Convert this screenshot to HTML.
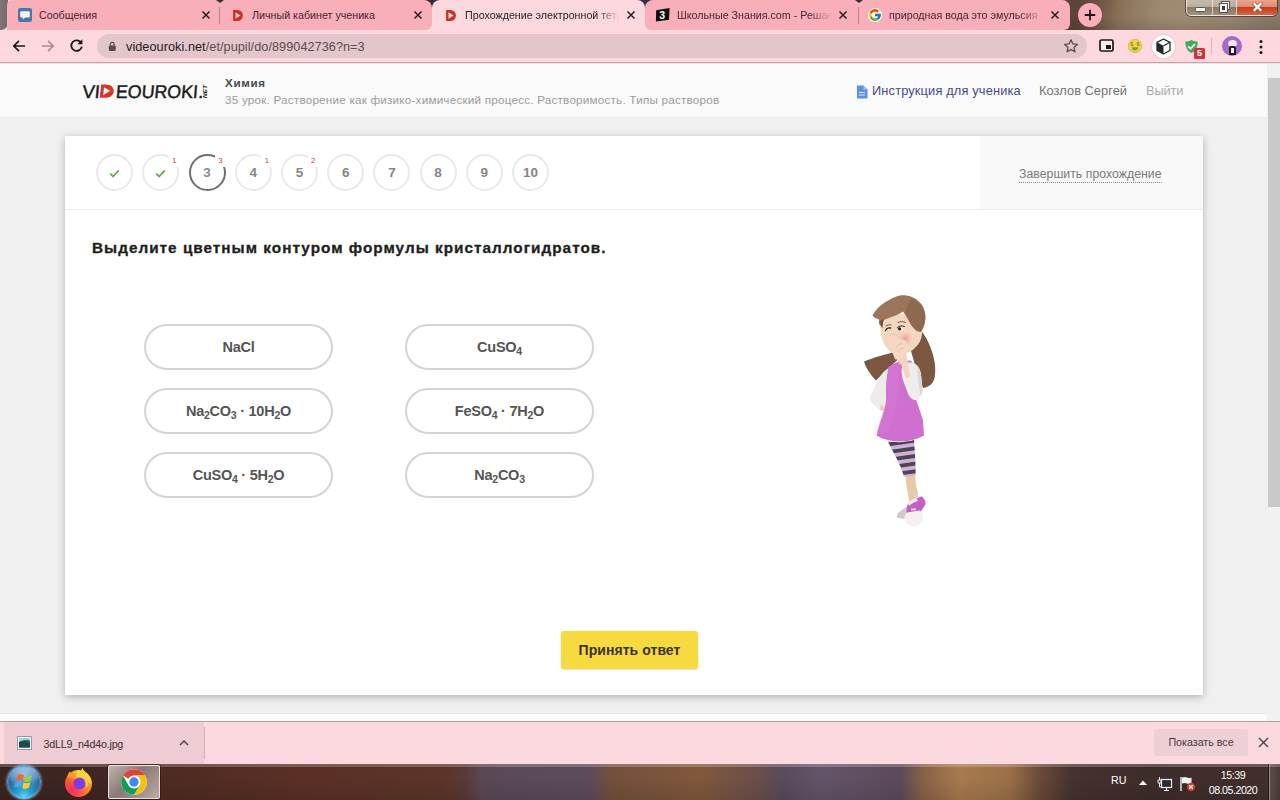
<!DOCTYPE html>
<html lang="ru">
<head>
<meta charset="utf-8">
<title>Прохождение электронной тетради</title>
<style>
*{box-sizing:border-box;margin:0;padding:0}
html,body{width:1280px;height:800px;overflow:hidden;background:#f0f0f0;font-family:"Liberation Sans",sans-serif}
.abs{position:absolute}
#screen{position:absolute;left:0;top:0;width:1280px;height:800px;overflow:hidden}

/* ---------- title / tab strip ---------- */
#titlebar{left:0;top:0;width:1280px;height:30px;background:linear-gradient(180deg,rgba(0,0,0,0) 55%,rgba(40,30,30,.16) 100%),linear-gradient(100deg,#6b6468 0,#5a5054 6px,#3b3038 220px,#2e2a3a 440px,#3a3444 650px,#4a3c40 860px,#5c4438 1066px,#745a48 1088px,#8a725a 1105px,#9c886e 1140px,#a08c72 1170px,#988670 1215px,#8c7c6a 1250px,#857765 1280px)}
.tab{top:0;height:30px;background:#f9afba;border-radius:8px 8px 8px 8px;color:#3a2a30;font-size:12px}
.tab .ttl{position:absolute;top:8px;white-space:nowrap;overflow:hidden;letter-spacing:-0.1px}
.tab .cls{position:absolute;top:9px;width:12px;height:12px}
.tabsep{top:7px;width:1px;height:17px;background:#b7838d}

#tabstrip{left:7px;top:0;width:425px;height:30px;background:#f9afba;border-radius:5px 8px 6px 0}
#tl{left:0;top:0;width:7.500px;height:29.500px;background:linear-gradient(90deg,#7d7577,#756b6d);border-radius:0 0 7px 0}
#tabstrip2{left:645px;top:0;width:425px;height:30px;background:#f9afba;border-radius:8px 8px 6px 6px}
.notch{top:0;width:0;height:0;margin-left:1.500px;border-left:4px solid transparent;border-right:4px solid transparent;border-top:3.500px solid #33303e}
#acttab{left:432px;top:0;width:213px;height:31px;background:#fdd9df;border-radius:8px 8px 0 0}
.ttl{top:8px;height:15px;font-size:10.700px;line-height:14px;color:#472430;white-space:nowrap;overflow:hidden}
.fade1{-webkit-mask-image:linear-gradient(90deg,#000 85%,transparent 100%);mask-image:linear-gradient(90deg,#000 85%,transparent 100%)}
.fade2{-webkit-mask-image:linear-gradient(90deg,#000 85%,transparent 100%);mask-image:linear-gradient(90deg,#000 85%,transparent 100%)}
.cls{top:10px;width:10px;height:10px}
#wc{left:1186px;top:0;width:91px;height:15.500px;border:1px solid rgba(255,255,255,.65);border-top:0;border-radius:0 0 5px 5px;background:linear-gradient(rgba(255,255,255,.42) 0,rgba(255,255,255,.3) 46%,rgba(60,50,45,.18) 50%,rgba(255,255,255,.06) 100%);box-shadow:0 0 0 1px rgba(40,30,30,.6)}
#toolbar{left:0;top:30px;width:1280px;height:32px;background:#fdd9df}
#toolbar-border{left:0;top:62px;width:1280px;height:2px;background:linear-gradient(#c4a2a8 0,#c4a2a8 50%,#eee0e3 50%,#eee0e3 100%);z-index:5}
#omni{left:97px;top:34px;width:990px;height:24px;border-radius:12px;background:#e2c6cb}
#url{left:126px;top:39.500px;font-size:12.700px;color:#5d4b50;white-space:nowrap;letter-spacing:0.05px}
#url b{font-weight:normal;color:#241a1d}

/* ---------- page ---------- */
#page{left:0;top:63px;width:1267px;height:658px;background:#f0f0f0;overflow:hidden}
#hdr{left:0;top:0;width:1267px;height:55px;background:#fafafa;border-bottom:1px solid #ebebeb}
#card{left:65px;top:73px;width:1138px;height:559px;background:#fff;box-shadow:0 2px 8px rgba(0,0,0,.26)}
#cardtop{left:0;top:0;width:1138px;height:74px;border-bottom:1px solid #ececec}
#finish{left:915px;top:0;width:223px;height:73px;background:#f9f9f9}
.step{top:18px;width:37px;height:37px;border:2px solid #e9e9e9;border-radius:50%;color:#858585;font-weight:bold;font-size:13.500px;text-align:center;line-height:33.500px}
.step.cur{border-color:#707070;color:#8a8a8a}
.badge{position:absolute;right:-2.500px;top:-1px;width:11px;height:12px;background:#fff;color:#b8453a;font-size:7.500px;line-height:11px;font-weight:normal;text-align:center}
#finlink{left:39px;top:30px;font-size:12.300px;color:#7a7a7a;white-space:nowrap;line-height:16px;border-bottom:1px dotted #8a8a8a;letter-spacing:.02px}
#q{left:27px;top:102.200px;font-size:15.300px;font-weight:bold;color:#1e1e1e;white-space:nowrap;letter-spacing:1.020px;line-height:20px;-webkit-text-stroke:.3px #1e1e1e}
.pill{width:189px;height:46px;border:2px solid #d4d4d4;border-radius:23px;color:#555;font-weight:bold;font-size:14.500px;text-align:center;line-height:43px;white-space:nowrap;letter-spacing:-.25px}
.pill sub{font-size:10.5px;vertical-align:baseline;position:relative;top:3px}
#btn{left:496px;top:495px;width:137px;height:38px;background:#f7d940;border-radius:3px;color:#3a3418;font-weight:bold;font-size:14px;letter-spacing:.06px;text-align:center;line-height:38px;box-shadow:0 1px 2px rgba(0,0,0,.15)}

/* ---------- scrollbar ---------- */
#sb{left:1267px;top:63px;width:13px;height:658px;background:#f1f1f1}
#sbthumb{left:1px;top:15px;width:12px;height:429px;background:#c9c9c9}

/* ---------- download bar ---------- */
#dl{left:0;top:721px;width:1280px;height:43px;background:#fcd9df;border-top:1px solid #b99ca1}
#dlitem{left:4px;top:0;width:200px;height:42px;background:#edcdd3}
#showall{left:1154px;top:7px;width:94px;height:27px;background:#edd0d6;border-radius:3px;color:#4a3a3e;font-size:10.700px;text-align:center;line-height:27px}

/* ---------- taskbar ---------- */
#task{left:0;top:764px;width:1280px;height:36px;overflow:hidden;background:linear-gradient(90deg,#3a2420 0,#402622 100px,#4e2a22 160px,#5a3026 300px,#5c3428 440px,#5a3a38 466px,#5a4856 482px,#5c4c5a 590px,#74503c 612px,#80583c 700px,#6a4e4c 760px,#5a4a5c 782px,#64546a 820px,#5c4a5a 900px,#8a6446 925px,#a87a4e 960px,#9a7048 1010px,#6a4a3a 1040px,#463230 1072px,#3e2c2a 1150px,#42302e 1280px)}
#tb-hi{left:0;top:0;width:1280px;height:36px;background:linear-gradient(180deg,rgba(255,255,255,.22) 0,rgba(255,255,255,.2) 3px,rgba(255,255,255,0) 3.500px,rgba(255,255,255,0) 14px,rgba(0,0,0,.1) 36px)}
</style>
</head>
<body>
<div id="screen">

<!-- TITLEBAR -->
<div id="titlebar" class="abs"></div>


<!-- TABS -->
<div class="abs" style="left:424px;top:20px;width:230px;height:10px;background:#fdd9df"></div>
<div class="abs" style="left:0;top:0;width:12px;height:30px;background:#fdd9df"></div><div id="tl" class="abs"></div>
<div id="tabstrip" class="abs"></div>
<div id="tabstrip2" class="abs"></div>
<div class="abs notch" style="left:214px"></div>
<div class="abs notch" style="left:427px"></div>
<div class="abs notch" style="left:640px"></div>
<div class="abs notch" style="left:853px"></div>
<div id="acttab" class="abs"></div>
<div class="abs tabsep" style="left:219px"></div>
<div class="abs tabsep" style="left:858px"></div>

<!-- tab 1 -->
<svg class="abs" style="left:18px;top:8px" width="14" height="14" viewBox="0 0 14 14"><rect width="14" height="14" rx="2.200" fill="#4a76a8"/><path d="M3.600 3.200h6.800a1.400 1.400 0 0 1 1.400 1.400v3.600a1.400 1.400 0 0 1-1.400 1.400H7.200L4.800 11.600V9.600H3.600a1.400 1.400 0 0 1-1.400-1.400V4.600a1.400 1.400 0 0 1 1.400-1.400z" fill="#f2f5f9"/></svg>
<div class="abs ttl" style="left:39px;width:150px">Сообщения</div>
<svg class="abs cls" style="left:201px" viewBox="0 0 10 10"><path d="M1.5 1.5l7 7M8.500 1.500l-7 7" stroke="#2a1a1e" stroke-width="1.5" fill="none"/></svg>

<!-- tab 2 -->
<svg class="abs" style="left:231.500px;top:8.500px" width="12" height="13" viewBox="0 0 13 14"><path d="M1.200 1h4.600a6 6 0 0 1 0 12H1.200z" fill="#c8302a"/><path d="M3.800 3.600l5.400 3.400-5.400 3.400z" fill="#fbc9ba"/></svg>
<div class="abs ttl" style="left:252px;width:150px">Личный кабинет ученика</div>
<svg class="abs cls" style="left:413px" viewBox="0 0 10 10"><path d="M1.5 1.5l7 7M8.500 1.500l-7 7" stroke="#2a1a1e" stroke-width="1.5" fill="none"/></svg>

<!-- tab 3 (active) -->
<svg class="abs" style="left:444.500px;top:8.500px" width="12" height="13" viewBox="0 0 13 14"><path d="M1.200 1h4.600a6 6 0 0 1 0 12H1.200z" fill="#c8302a"/><path d="M3.800 3.600l5.400 3.400-5.400 3.400z" fill="#fde3da"/></svg>
<div class="abs ttl fade2" style="left:465px;width:155px;color:#2e2226">Прохождение электронной тетради</div>
<svg class="abs cls" style="left:626px" viewBox="0 0 10 10"><path d="M1.5 1.5l7 7M8.500 1.500l-7 7" stroke="#2a1a1e" stroke-width="1.5" fill="none"/></svg>

<!-- tab 4 -->
<svg class="abs" style="left:655px;top:7px" width="16" height="16" viewBox="0 0 16 16"><path d="M1.2 3.200L14.600 1l-.6 11.800L.900 14.600z" fill="#0b0b0b"/><text x="4.300" y="12" font-family="Liberation Sans, sans-serif" font-weight="bold" font-size="10.500" fill="#fff">3</text></svg>
<div class="abs ttl fade1" style="left:677px;width:155px">Школьные Знания.com - Решаем</div>
<svg class="abs cls" style="left:838px" viewBox="0 0 10 10"><path d="M1.5 1.5l7 7M8.500 1.500l-7 7" stroke="#2a1a1e" stroke-width="1.5" fill="none"/></svg>

<!-- tab 5 -->
<svg class="abs" style="left:868px;top:8px" width="14" height="14" viewBox="0 0 48 48"><circle cx="24" cy="24" r="24" fill="#fff"/><path d="M43.600 20.100H42V20H24v8h11.300c-1.600 4.700-6.100 8-11.300 8-6.600 0-12-5.400-12-12s5.400-12 12-12c3.100 0 5.800 1.200 8 3l5.700-5.700C34 6.100 29.300 4 24 4 13 4 4 13 4 24s9 20 20 20 20-9 20-20c0-1.300-.1-2.600-.4-3.900z" fill="#FFC107"/><path d="M6.300 14.700l6.600 4.800C14.700 15.100 19 12 24 12c3.100 0 5.800 1.200 8 3l5.700-5.700C34 6.100 29.300 4 24 4 16.300 4 9.700 8.300 6.300 14.700z" fill="#FF3D00"/><path d="M24 44c5.200 0 9.900-2 13.400-5.200l-6.200-5.200c-2 1.500-4.500 2.400-7.200 2.400-5.200 0-9.600-3.300-11.300-8l-6.500 5C9.500 39.600 16.200 44 24 44z" fill="#4CAF50"/><path d="M43.600 20.100H42V20H24v8h11.300c-.8 2.200-2.200 4.200-4.100 5.600l6.200 5.200C37 39.200 44 34 44 24c0-1.300-.1-2.600-.4-3.900z" fill="#1976D2"/></svg>
<div class="abs ttl fade1" style="left:889px;width:155px">природная вода это эмульсия - По</div>
<svg class="abs cls" style="left:1050px" viewBox="0 0 10 10"><path d="M1.5 1.5l7 7M8.500 1.500l-7 7" stroke="#2a1a1e" stroke-width="1.5" fill="none"/></svg>

<!-- new tab button -->
<div class="abs" style="left:1078px;top:3px;width:24px;height:24px;border-radius:50%;background:#f9afba"></div>
<svg class="abs" style="left:1084px;top:9px" width="12" height="12" viewBox="0 0 12 12"><path d="M6 .8v10.400M.8 6h10.400" stroke="#1e1216" stroke-width="1.800"/></svg>

<!-- window controls -->
<div id="wc" class="abs">
  <div class="abs" style="left:0;top:0;width:26px;height:15px;border-right:1px solid rgba(255,255,255,.6)"><div class="abs" style="left:8px;top:7px;width:11px;height:5px;background:#f6f6f6;border:1px solid #5a5350;border-radius:1.500px"></div></div>
  <div class="abs" style="left:26px;top:0;width:24px;height:15px;border-right:1px solid rgba(255,255,255,.6)">
    <div class="abs" style="left:9px;top:2px;width:7px;height:7px;border:1.500px solid #f4f4f4;outline:1px solid #5a5350;background:#9a9088"></div>
    <div class="abs" style="left:6.500px;top:4px;width:7.500px;height:7.500px;border:2px solid #f4f4f4;outline:1px solid #5a5350;background:#3a3a44"></div>
  </div>
  <div class="abs" style="left:50px;top:0;width:40px;height:15px;background:linear-gradient(#eba590 0,#e28a72 46%,#c63f1e 50%,#d0522e 80%,#d8684a 100%);border-radius:0 0 4px 0"></div>
  <svg class="abs" style="left:65px;top:2px" width="11" height="10" viewBox="0 0 11 10"><path d="M2.500 2l6 6M8.500 2l-6 6" stroke="#8a4a3c" stroke-width="3.800" stroke-linecap="square" opacity=".75"/><path d="M2.500 2l6 6M8.500 2l-6 6" stroke="#fff" stroke-width="2.300" stroke-linecap="square"/></svg>
</div>

<!-- TOOLBAR -->
<div id="toolbar" class="abs"></div>
<div id="toolbar-border" class="abs"></div>
<div id="omni" class="abs"></div>
<div id="url" class="abs"><b>videouroki.net</b>/et/pupil/do/899042736?n=3</div>


<!-- toolbar icons -->
<svg class="abs" style="left:12px;top:39px" width="14" height="14" viewBox="0 0 14 14"><path d="M13 7H2.200M7 1.800L1.800 7 7 12.200" stroke="#1d1216" stroke-width="1.700" fill="none"/></svg>
<svg class="abs" style="left:41px;top:39px" width="14" height="14" viewBox="0 0 14 14"><path d="M1 7h10.800M7 1.800L12.200 7 7 12.200" stroke="#a98b91" stroke-width="1.700" fill="none"/></svg>
<svg class="abs" style="left:69px;top:38px" width="15" height="15" viewBox="0 0 15 15"><path d="M12.300 5.200A5.300 5.300 0 1 0 12.800 8.600" stroke="#1d1216" stroke-width="1.800" fill="none"/><path d="M13.400 1.200v5h-5z" fill="#1d1216"/></svg>
<svg class="abs" style="left:108px;top:40.500px" width="8.500" height="10.500" viewBox="0 0 10 12"><rect x="1" y="5" width="8" height="6.500" rx="1" fill="#5a474c"/><path d="M2.800 5.500V3.600a2.200 2.200 0 0 1 4.400 0v1.900" stroke="#5a474c" stroke-width="1.400" fill="none"/></svg>
<!-- star -->
<svg class="abs" style="left:1063px;top:38px" width="16" height="16" viewBox="0 0 16 16"><path d="M8 1.800l1.900 4.100 4.400.5-3.300 3 .9 4.400L8 11.600l-3.900 2.200.9-4.400-3.300-3 4.400-.5z" fill="none" stroke="#5b484d" stroke-width="1.300" stroke-linejoin="round"/></svg>
<!-- pip -->
<svg class="abs" style="left:1099px;top:39px" width="15" height="13" viewBox="0 0 15 13"><rect x="1" y="1" width="13" height="11" rx="1.500" fill="#fdf0f2" stroke="#1f1418" stroke-width="1.700"/><rect x="7" y="6" width="5" height="4" fill="#1f1418"/></svg>
<!-- emoji -->
<svg class="abs" style="left:1127px;top:38px" width="16" height="16" viewBox="0 0 18 18"><circle cx="9" cy="9" r="7.500" fill="#f6cf4c"/><circle cx="9" cy="9" r="7.500" fill="none" stroke="#e2a93a" stroke-width=".8"/><text x="3.600" y="9" font-size="6" font-weight="bold" font-family="Liberation Sans, sans-serif" fill="#7a8f2a">$</text><text x="10.800" y="9" font-size="6" font-weight="bold" font-family="Liberation Sans, sans-serif" fill="#7a8f2a">$</text><path d="M5.500 10.500h7a3.500 3.500 0 0 1-7 0z" fill="#6aa64a"/></svg>
<!-- cube -->
<div class="abs" style="left:1152px;top:35px;width:23px;height:23px;border-radius:50%;background:#fff;box-shadow:0 0 2px rgba(120,80,90,.35)"></div>
<svg class="abs" style="left:1156px;top:38px" width="15" height="17" viewBox="0 0 15 17"><path d="M7.500 1L14 4.300v8.200L7.500 16 1 12.500V4.300z" fill="#fff" stroke="#26262a" stroke-width="1.300" stroke-linejoin="round"/><path d="M1 4.300l6.500 3.400V16L1 12.500z" fill="#26262a"/><path d="M7.500 7.700L14 4.300" stroke="#26262a" stroke-width="1.200"/></svg>
<!-- shield -->
<svg class="abs" style="left:1183.500px;top:38.500px" width="15" height="15" viewBox="0 0 17 17"><path d="M8.500 1c2.300 1.200 4.700 1.700 7 1.700 0 6-2 10.800-7 13.300-5-2.500-7-7.300-7-13.300 2.300 0 4.700-.5 7-1.700z" fill="#43a85a"/><path d="M4.800 8.300l2.600 2.700 4.900-5.200" stroke="#fff" stroke-width="1.900" fill="none"/></svg>
<div class="abs" style="left:1194px;top:48px;width:11px;height:11px;background:#d2323c;border-radius:1.500px;color:#fff;font-size:9px;font-weight:bold;line-height:11px;text-align:center">5</div>
<div class="abs" style="left:1211px;top:38px;width:1px;height:16px;background:#d4b4ba"></div>
<!-- avatar -->
<div class="abs" style="left:1222px;top:36px;width:20px;height:20px;border-radius:50%;background:#a868c8;overflow:hidden">
  <div class="abs" style="left:6px;top:4px;width:9px;height:7px;border-radius:50%;background:#eee6f2"></div>
  <div class="abs" style="left:7px;top:10px;width:7px;height:9px;border-radius:2px 2px 0 0;background:#1e1a22"></div>
  <div class="abs" style="left:9px;top:12px;width:3px;height:5px;background:#f4f0f4"></div>
</div>
<!-- menu dots -->
<svg class="abs" style="left:1258px;top:39px" width="6" height="16" viewBox="0 0 6 16"><circle cx="3" cy="2.500" r="1.500" fill="#1d1216"/><circle cx="3" cy="8" r="1.500" fill="#1d1216"/><circle cx="3" cy="13.500" r="1.500" fill="#1d1216"/></svg>

<!-- PAGE -->
<div id="page" class="abs">
  <div id="hdr" class="abs">
    <svg class="abs" style="left:80px;top:15px" width="132" height="26" viewBox="0 0 132 26">
      <g font-family="Liberation Sans, sans-serif" font-size="18.300" fill="#1a1a1a" stroke="#1a1a1a" stroke-width=".45" transform="skewX(-5) translate(1.700 0)">
        <text x="2.100" y="19.700" textLength="17.400" lengthAdjust="spacingAndGlyphs">VI</text>
        <text x="35.500" y="19.700" textLength="82" lengthAdjust="spacingAndGlyphs">EOUROKI</text>
        <text x="118" y="19.700">.</text>
      </g>
      <path d="M21.200 6.600h4.300c5.200 0 8.200 2.800 8.200 6.400 0 3.900-3.200 6.800-8.600 6.800h-5.400z" fill="#d9342b"/>
      <path d="M24 9.200l6.200 3.600-7 4.400z" fill="#fbeeea"/>
      <text transform="translate(126.800,20.300) rotate(-90)" font-family="Liberation Sans, sans-serif" font-weight="bold" font-style="italic" font-size="6" fill="#1a1a1a" textLength="13.300" lengthAdjust="spacingAndGlyphs">NET</text>
    </svg>
    <div class="abs" style="left:225px;top:13px;font-size:11.600px;font-weight:bold;color:#4a4a4a;letter-spacing:.65px;white-space:nowrap;line-height:14px">Химия</div>
    <div class="abs" style="left:225px;top:29.500px;font-size:11.700px;color:#9c9c9c;letter-spacing:.21px;white-space:nowrap;line-height:14px">35 урок. Растворение как физико-химический процесс. Растворимость. Типы растворов</div>
    <svg class="abs" style="left:856px;top:22px" width="12" height="14" viewBox="0 0 12 14"><path d="M1 .5h6.500L11.500 4.500V13.500H1z" fill="#5c8fec"/><path d="M7.500.5v4h4z" fill="#a9c4f5"/><path d="M3 7.500h6M3 10h6" stroke="#dfe9fb" stroke-width="1.100"/></svg>
    <div class="abs" style="left:872px;top:19px;font-size:12.800px;color:#454c93;letter-spacing:.16px;white-space:nowrap;line-height:17px">Инструкция для ученика</div>
    <div class="abs" style="left:1039px;top:19px;font-size:12.800px;color:#757575;letter-spacing:.05px;white-space:nowrap;line-height:17px">Козлов Сергей</div>
    <div class="abs" style="left:1146px;top:19px;font-size:12.800px;color:#ababab;letter-spacing:-.1px;white-space:nowrap;line-height:17px">Выйти</div>
  </div>
  <div id="card" class="abs">
    <div id="cardtop" class="abs"><div id="finish" class="abs"><span id="finlink" class="abs">Завершить прохождение</span></div>
      <div class="abs step" style="left:31.2px"><svg width="11" height="9" viewBox="0 0 11 9" style="position:absolute;left:11px;top:13px"><path d="M1.200 4.600l2.900 2.900 5.700-6.200" stroke="#5fb04a" stroke-width="1.800" fill="none"/></svg></div>
      <div class="abs step" style="left:77.4px"><svg width="11" height="9" viewBox="0 0 11 9" style="position:absolute;left:11px;top:13px"><path d="M1.200 4.600l2.900 2.900 5.700-6.200" stroke="#5fb04a" stroke-width="1.800" fill="none"/></svg><span class="badge">1</span></div>
      <div class="abs step cur" style="left:123.6px">3<span class="badge">3</span></div>
      <div class="abs step" style="left:169.8px">4<span class="badge">1</span></div>
      <div class="abs step" style="left:216px">5<span class="badge">2</span></div>
      <div class="abs step" style="left:262.2px">6</div>
      <div class="abs step" style="left:308.4px">7</div>
      <div class="abs step" style="left:354.6px">8</div>
      <div class="abs step" style="left:400.8px">9</div>
      <div class="abs step" style="left:447px">10</div>
    </div>
    <div id="q" class="abs">Выделите цветным контуром формулы кристаллогидратов.</div>
    <div class="abs pill" style="left:79px;top:188px">NaCl</div>
    <div class="abs pill" style="left:340px;top:188px">CuSO<sub>4</sub></div>
    <div class="abs pill" style="left:79px;top:252px">Na<sub>2</sub>CO<sub>3</sub> · 10H<sub>2</sub>O</div>
    <div class="abs pill" style="left:340px;top:252px">FeSO<sub>4</sub> · 7H<sub>2</sub>O</div>
    <div class="abs pill" style="left:79px;top:316px">CuSO<sub>4</sub> · 5H<sub>2</sub>O</div>
    <div class="abs pill" style="left:340px;top:316px">Na<sub>2</sub>CO<sub>3</sub></div>
    <svg class="abs" style="left:785px;top:149px" width="100" height="250" viewBox="850 285 100 250">
      <defs>
        <pattern id="stripes" x="0" y="441" width="10" height="7.600" patternUnits="userSpaceOnUse" patternTransform="rotate(-8 900 458)"><rect width="10" height="3.800" fill="#4b4552"/><rect y="3.800" width="10" height="3.800" fill="#cfb0d8"/></pattern>
        <radialGradient id="blush"><stop offset="0" stop-color="#e79a98" stop-opacity=".95"/><stop offset="1" stop-color="#efb9ad" stop-opacity="0"/></radialGradient>
        <filter id="soft" x="-5%" y="-5%" width="110%" height="110%"><feGaussianBlur stdDeviation=".35"/></filter>
      </defs>
      <g filter="url(#soft)">
      <!-- back hair -->
      <path d="M920 329c5 6 9.500 14 12.500 24 2.800 9.500 3.500 18 2 25-1.200 5.500-5 9-11.500 10-2.500-5-4.500-10.500-6-16l-6-21z" fill="#7b5740"/>
      <path d="M897 351c-6 2-12 3.500-17 5-6 1.800-11 3.500-16 5.500 1 3.500 2.500 6.500 4.500 9.500 2.200 3.400 4.500 6.500 7.500 9.500l12-12 9-8z" fill="#7b5740"/>
      <!-- far arm / left sleeve -->
      <path d="M888 368.500c-3.500 2-6.500 5.500-9 10-3 5.500-6 11.500-8.500 17.500-1 3 0 5.500 2 7.500 2.500 2.500 5.500 5 8.500 7 2 .8 3.500-.5 3.800-2.500l.7-14 1.500-13z" fill="#efebeb"/>
      <path d="M881 404c1.500 1.500 3 3.500 3.500 6-1.500 1-3 .5-4.500-.5z" fill="#f0cdb4"/>
      <!-- legs -->
      <path d="M905.500 476l9.500-1c.4 5.500 1 11 2.500 16 .8 2.500 1 4.500.3 6.500l-8.300 5c-.6-4.500-1.500-9-2.500-13.500-.8-4.400-1.200-8.700-1.500-13z" fill="#e9c9a3"/>
      <path d="M913 490l4.500 3.500c.6 1.500.6 3 .2 4.500l-3.700 1.500z" fill="#d9d2c8"/>
      <!-- leggings -->
      <path d="M887.500 441c8.500 1.800 17.500 1.500 26.500-1 .6 7 1 14 1.300 21 .2 5 .4 9.500.4 14-3.500 1.600-7.500 2-11.700 1.200-1.500-5-3.500-10-6-15-3.500-7-7-13.500-10.500-20.200z" fill="url(#stripes)"/>
      <!-- shoe -->
      <path d="M898 513l8-6 3 6-5 6-7.500-1.500z" fill="#cfcacb"/>
      <path d="M907 505.500c1.500-2.500 4-4 7-5l5.500-3.500c1.500-1 3-.6 4 1l1.800 3.500c.5 1.500.2 3-.8 4.500l-5.500 8-10.500 3c-2-3.500-2.500-7.500-1.500-11.500z" fill="#c561c3"/>
      <path d="M908 503c2-2.500 5-4 8.500-4.500l1.500 2.500c-3.500 1-6.500 2.500-9 5z" fill="#f4eff2"/>
      <path d="M905 515c1-2 3-3 5.500-3l9-1.500c2 1 3.200 2.800 3.500 5.500.3 3.500-1 6.500-3.500 8.500-2.500 2-5.500 2.500-8.500 1.500-3.500-1.200-5.500-3.500-6.300-6.500-.4-1.500-.3-3 .3-4.500z" fill="#f6f0f5"/>
      <path d="M911 508.500h5v1.800h-5z" fill="#f0dff0"/>
      <!-- dress -->
      <path d="M888.500 367c3-2.500 7-4.500 11-5.500l11-1c2 1.500 3.500 4 3.500 7l-3 14c1 6.500 3 13 5.500 19.500 2.500 6.500 4.500 13 6.500 19.500l1 15c-7.500 4-15.500 6-24 6-8.500 0-16.500-2-23.500-6 2-7.500 4.500-15 7-22.500 2-6 2.800-12 2.500-18.500-.3-6.500.2-13 1.200-19.500z" fill="#cf6fce"/>
      <path d="M892 366c2.500-2 5.500-3.500 9-4.500l-2 14c-.5 10-1 20-3 30-2 10-5.500 19-10 28-3 .5-6-.5-9-2 2-7.500 4.500-15 7-22.500 2-6 2.800-12 2.500-18.500-.3-8 .5-16 2.500-24z" fill="#d57ad6" opacity=".55"/>
      <!-- near arm sleeve -->
      <path d="M906 363c3.500-1 7-.5 10 1.500 3 2.200 4.500 5.500 5 9.500l1.500 14c.3 3.500-.3 6.500-2 9-1.500 2.200-3.500 3.200-6 3-2.500-.3-4.500-2-6-5l-4.500-12c-1.500-4-2.500-8-2.500-12 0-3.500 1.500-6.500 4.500-8z" fill="#f0ecec"/>
      <path d="M917 366c2.500 3 4 7 4.300 11.500l1 11c.2 3-.3 5.500-1.500 7.500-2-9-3-19.500-3.800-30z" fill="#dcd6d8"/>
      <!-- neck, hand, arm -->
      <path d="M896 352l10-2c-.5 4 0 8 1.500 12l-8 2.500c-1.500-4-2.500-8-3.500-12.500z" fill="#ecc8ae"/>
      <path d="M898 356c2 4.500 3.500 9 5 13.500 1 3.500 2 6.500 3.500 9.500l4-3c-1.200-4-2-8-2.500-12-.4-3.500-.8-7-2-10z" fill="#f3d5bf"/>
      <!-- face -->
      <path d="M881.500 322c4-4 9-6.500 15-7.500 7-1 13.500.5 19 4.500 4 3 6 7 6.500 12 .3 5-1 9.500-4 13.500-3 4-7 7-12 9-4 1.500-8 1.800-11.500.5-4-1.500-7-4.500-9.500-8.500-2.500-4.500-4-9.500-4.500-15-.2-3 0-6 1-8.500z" fill="#f3d6c0"/>
      <circle cx="905.500" cy="338.500" r="7.500" fill="url(#blush)"/>
      <!-- hand over mouth -->
      <path d="M889.500 336c1.500-1.800 3.800-2.200 6-1.300 2.200.9 3.800 2.600 4.800 4.800 2.200-.4 4.200.3 5.500 2.200 1.300 2 1.600 4.400 1 7-.6 3.200-2 6-3.800 8l-1.500 3.500-6.500-1c-1-3-2.200-5.800-3.800-8.400-1.500-2.500-2.400-5.200-2.600-8-.2-2.600.2-4.900.9-6.800z" fill="#f4d8c4"/><path d="M889.500 336c1.500-1.800 3.800-2.200 6-1.300 2.200.9 3.800 2.600 4.800 4.800" stroke="#ddb8a2" stroke-width=".7" fill="none"/>
      <path d="M896 348c1.500-2.500 3.500-4 6-4.500M897.500 352c1.500-2 3.500-3.500 6-4" stroke="#d6ae98" stroke-width=".7" fill="none"/>
      <!-- eyes / brows -->
      <path d="M885.500 330.500c1-2 2.800-3 5-2.500" stroke="#2a2020" stroke-width="1.300" fill="none" stroke-linecap="round"/>
      <ellipse cx="900.500" cy="328.700" rx="2.600" ry="1.700" fill="#fff"/>
      <ellipse cx="899.600" cy="328.800" rx="1.700" ry="1.600" fill="#2a2020"/>
      <path d="M897.500 327.500c2-1.800 4.500-2 7-1" stroke="#2a2020" stroke-width="1" fill="none" stroke-linecap="round"/>
      <path d="M886 326c1.500-1.200 3.200-1.600 5-1.200M898 322.500c2.500-1.300 5-1.300 7.500 0" stroke="#6a4a3a" stroke-width=".9" fill="none" stroke-linecap="round"/>
      <!-- top hair -->
      <path d="M872.500 315.500c2.500-4.500 5.500-8 9.500-11 4-3 8.500-5.500 13-7.500 3.500-1.500 7.500-2.200 11.500-1.500 5 .8 9.500 3 13 6.500 3.500 3.500 5.500 8 6 13.500.4 5-1 10.500-4.500 16.500l-4-1c-3.500-2.500-6-6-8-10l-6-9.500c-3.500 2.500-7.500 4.300-11.500 5.500-3.500 1.200-7 2.500-10 4.500l-1 5c-1.500-2-2-4.500-1.500-7l-2.500-1c-1.500-.5-2.800-1.400-4-3z" fill="#9c745a"/>
      <path d="M905.500 311c1-4.500 3-8.500 6-12 4 1.200 7.500 3.500 10 7 3 4.500 4 9.500 3.500 15-.4 4-1.800 7.500-4 11l-4-1c-3.500-2.500-6-6-8-10z" fill="#8c664f" opacity=".85"/>
      <path d="M880.500 321c1-1 2-1.500 3.500-2-1 3-1.500 6-1.500 9.500-1.500-2-2.200-4.500-2-7.500z" fill="#6e4c38"/>
      </g>
    </svg>
    <div id="btn" class="abs">Принять ответ</div>
  </div>
</div>

<div class="abs" style="left:0;top:713px;width:1267px;height:8px;background:#fcfcfc;border-top:1px solid #e9e9e9"></div>

<!-- SCROLLBAR -->
<div id="sb" class="abs"><div id="sbthumb" class="abs"></div></div>

<!-- DOWNLOAD BAR -->
<div id="dl" class="abs">
  <div id="dlitem" class="abs"></div>
  <div class="abs" style="left:204px;top:5px;width:1px;height:32px;background:#cfb1b7"></div>
  <svg class="abs" style="left:17px;top:14px" width="15" height="14" viewBox="0 0 15 14"><rect x=".5" y=".5" width="14" height="13" fill="#f4f6f8" stroke="#8e9aa4"/><rect x="2" y="2" width="11" height="9.500" fill="#2c6a72"/><path d="M2 6c3-1.500 7-1.500 11 1v4.500H2z" fill="#1d4a4e"/><path d="M2 2h11v2.500c-4-1-7-.5-11 1.500z" fill="#a8d0dc"/></svg>
  <div class="abs" style="left:43.500px;top:14.500px;font-size:10.700px;color:#3c2c30;white-space:nowrap;line-height:14px;letter-spacing:-.2px">3dLL9_n4d4o.jpg</div>
  <svg class="abs" style="left:179px;top:18px" width="10" height="6" viewBox="0 0 10 6"><path d="M1 5l4-4 4 4" stroke="#4a3a3e" stroke-width="1.400" fill="none"/></svg>
  <div id="showall" class="abs">Показать все</div>
  <svg class="abs" style="left:1258px;top:15px" width="11" height="11" viewBox="0 0 11 11"><path d="M1 1l9 9M10 1l-9 9" stroke="#4a3a3e" stroke-width="1.300" fill="none"/></svg>
</div>

<!-- TASKBAR -->
<div id="task" class="abs">
  <div class="abs" style="left:0;top:0;width:1280px;height:36px;background:linear-gradient(90deg,rgba(60,30,26,0) 0,rgba(60,30,26,0) 100%)"></div>
  <div class="abs" id="tb-hi"></div>
  <!-- start orb -->
  <div class="abs" style="left:7px;top:1px;width:34px;height:34px;border-radius:50%;background:radial-gradient(circle at 50% 92%,#58d0ee 0,#2a9ed0 22%,rgba(30,100,170,0) 55%),radial-gradient(circle at 50% 30%,#7fb6de 0,#3f80ba 40%,#1d4f8a 68%,#123a66 100%);box-shadow:0 0 2px 1px rgba(130,180,215,.7), inset 0 0 2px 1px rgba(190,225,245,.55)"></div>
  <div class="abs" style="left:10px;top:3px;width:28px;height:15px;border-radius:14px 14px 8px 8px/12px 12px 4px 4px;background:linear-gradient(rgba(255,255,255,.38),rgba(255,255,255,.06))"></div>
  <svg class="abs" style="left:14px;top:8px" width="21" height="20" viewBox="0 0 21 20"><path d="M3.200 3.400c2.300-1.400 4.500-1.500 6.800-.2l-1.400 5.600c-2.300-1.200-4.500-1.100-6.800.2z" fill="#ee6a2c"/><path d="M11.200 3.700c2.300 1.100 4.500 1 6.800-.4l-1.400 5.600c-2.300 1.400-4.500 1.500-6.800.4z" fill="#9ccc44"/><path d="M1.500 10.300c2.300-1.300 4.500-1.400 6.800-.2l-1.400 5.600c-2.300-1.200-4.500-1.100-6.800.2z" fill="#4aaaf0"/><path d="M9.500 10.600c2.300 1.100 4.500 1 6.800-.4l-1.400 5.600c-2.300 1.400-4.500 1.500-6.800.4z" fill="#fbcc34"/></svg>
  <!-- firefox -->
  <div class="abs" style="left:65px;top:6px;width:27px;height:27px;border-radius:50%;background:conic-gradient(from 0deg at 50% 50%,#ffd83a 0deg,#ffb52a 70deg,#ff8a1e 120deg,#ff3f52 190deg,#f8355c 230deg,#ff5a2c 290deg,#ff9a22 330deg,#ffd83a 360deg)"></div>
  <svg class="abs" style="left:63px;top:2px" width="32" height="32" viewBox="0 0 32 32"><path d="M19.500 1.500c.4 2.600 2.600 4.200 4.700 6.500 2.800 3 4.200 6.800 3.600 10.600-.8-2-1.900-3.300-3.400-4.200.9 2.700.5 5.400-.9 7.800-.2-3-1.700-5.400-4.300-6.900 1.300-2.900 1.100-5.700-.5-8.200-.6-1.800-.4-3.700.8-5.600z" fill="#ffd43a"/><path d="M4.500 10.500c.3-2.200 1.200-4 2.700-5.500.1 1.500.6 2.700 1.600 3.500 1.600-1.200 3.500-1.700 5.600-1.300-2 .9-3.200 2.400-3.700 4.400l-3.200.1c-1.400 0-2.400-.4-3-1.200z" fill="#ff9a22"/><circle cx="16.500" cy="17.500" r="6" fill="#7a3ff0"/><path d="M10.800 14.500c2-1.200 4-1.300 6-.5 1.800.8 2.800 2.200 3 4.200-1.200-1.300-2.600-1.800-4.200-1.500-1.600.3-2.600 1.200-3 2.700-.9-.8-1.700-2.400-1.800-4.900z" fill="#a02ad8" opacity=".75"/></svg>
  <!-- chrome button -->
  <div class="abs" style="left:108px;top:1px;width:52px;height:34px;border-radius:2px;border:1px solid rgba(255,255,255,.75);background:linear-gradient(135deg,rgba(205,195,190,.9) 0,rgba(150,135,130,.85) 45%,rgba(200,185,180,.9) 100%);box-shadow:0 0 0 1px rgba(40,20,20,.6)"></div>
  <svg class="abs" style="left:120px;top:4px" width="28" height="28" viewBox="0 0 48 48"><circle cx="24" cy="24" r="22" fill="#fff"/><path d="M24 2a22 22 0 0 1 19.050 11H24a11 11 0 0 0-9.530 5.500L5 13A22 22 0 0 1 24 2z" fill="#db4437"/><path d="M43.050 13A22 22 0 0 1 24 46l9.530-16.500A11 11 0 0 0 33.500 18.500 11 11 0 0 0 24 13z" fill="#f4c20d"/><path d="M24 46A22 22 0 0 1 4.950 13l9.520 16.500A11 11 0 0 0 33.530 29.500z" fill="#0f9d58"/><circle cx="24" cy="24" r="10" fill="#fff"/><circle cx="24" cy="24" r="8" fill="#4285f4"/></svg>
  <!-- tray -->
  <div class="abs" style="left:1111px;top:9px;font-size:10.700px;color:#fff;line-height:14px">RU</div>
  <svg class="abs" style="left:1139px;top:16px" width="8" height="5" viewBox="0 0 8 5"><path d="M0 5l4-4.500L8 5z" fill="#fff"/></svg>
  <svg class="abs" style="left:1157px;top:13px" width="16" height="15" viewBox="0 0 16 15"><rect x="4.500" y="2.500" width="10" height="8" fill="#2a2a30" stroke="#eee" stroke-width="1.200"/><path d="M7 13.500h5M9.500 10.500v3" stroke="#eee" stroke-width="1.200"/><path d="M2.500 0v3M1 3h3v3H1zM2.500 6v4h2" stroke="#eee" stroke-width="1" fill="none"/></svg>
  <svg class="abs" style="left:1179px;top:12px" width="17" height="16" viewBox="0 0 17 16"><path d="M2 1v14" stroke="#eee" stroke-width="1.400"/><path d="M3 1.500c2-.8 3.500-.8 5 0s3 .8 4.500 0v6c-1.500.8-3 .8-4.500 0s-3-.8-5 0z" fill="#f2f2f2"/><circle cx="12" cy="11" r="4.200" fill="#d8382c"/><path d="M10.200 9.200l3.600 3.600M13.800 9.200l-3.600 3.600" stroke="#fff" stroke-width="1.300"/></svg>
  <div class="abs" style="left:1209px;top:4px;width:48px;text-align:center;font-size:10.700px;color:#fff;line-height:14px;letter-spacing:-.4px">15:39</div>
  <div class="abs" style="left:1205px;top:19px;width:56px;text-align:center;font-size:10.700px;color:#fff;line-height:14px;letter-spacing:-.5px">08.05.2020</div>
  <div class="abs" style="left:1268px;top:0;width:12px;height:36px;border-left:1px solid rgba(20,10,10,.7);box-shadow:inset 1px 0 0 rgba(255,255,255,.35);background:linear-gradient(90deg,rgba(255,255,255,.15),rgba(255,255,255,.05))"></div>
</div>

</div>
</body>
</html>
